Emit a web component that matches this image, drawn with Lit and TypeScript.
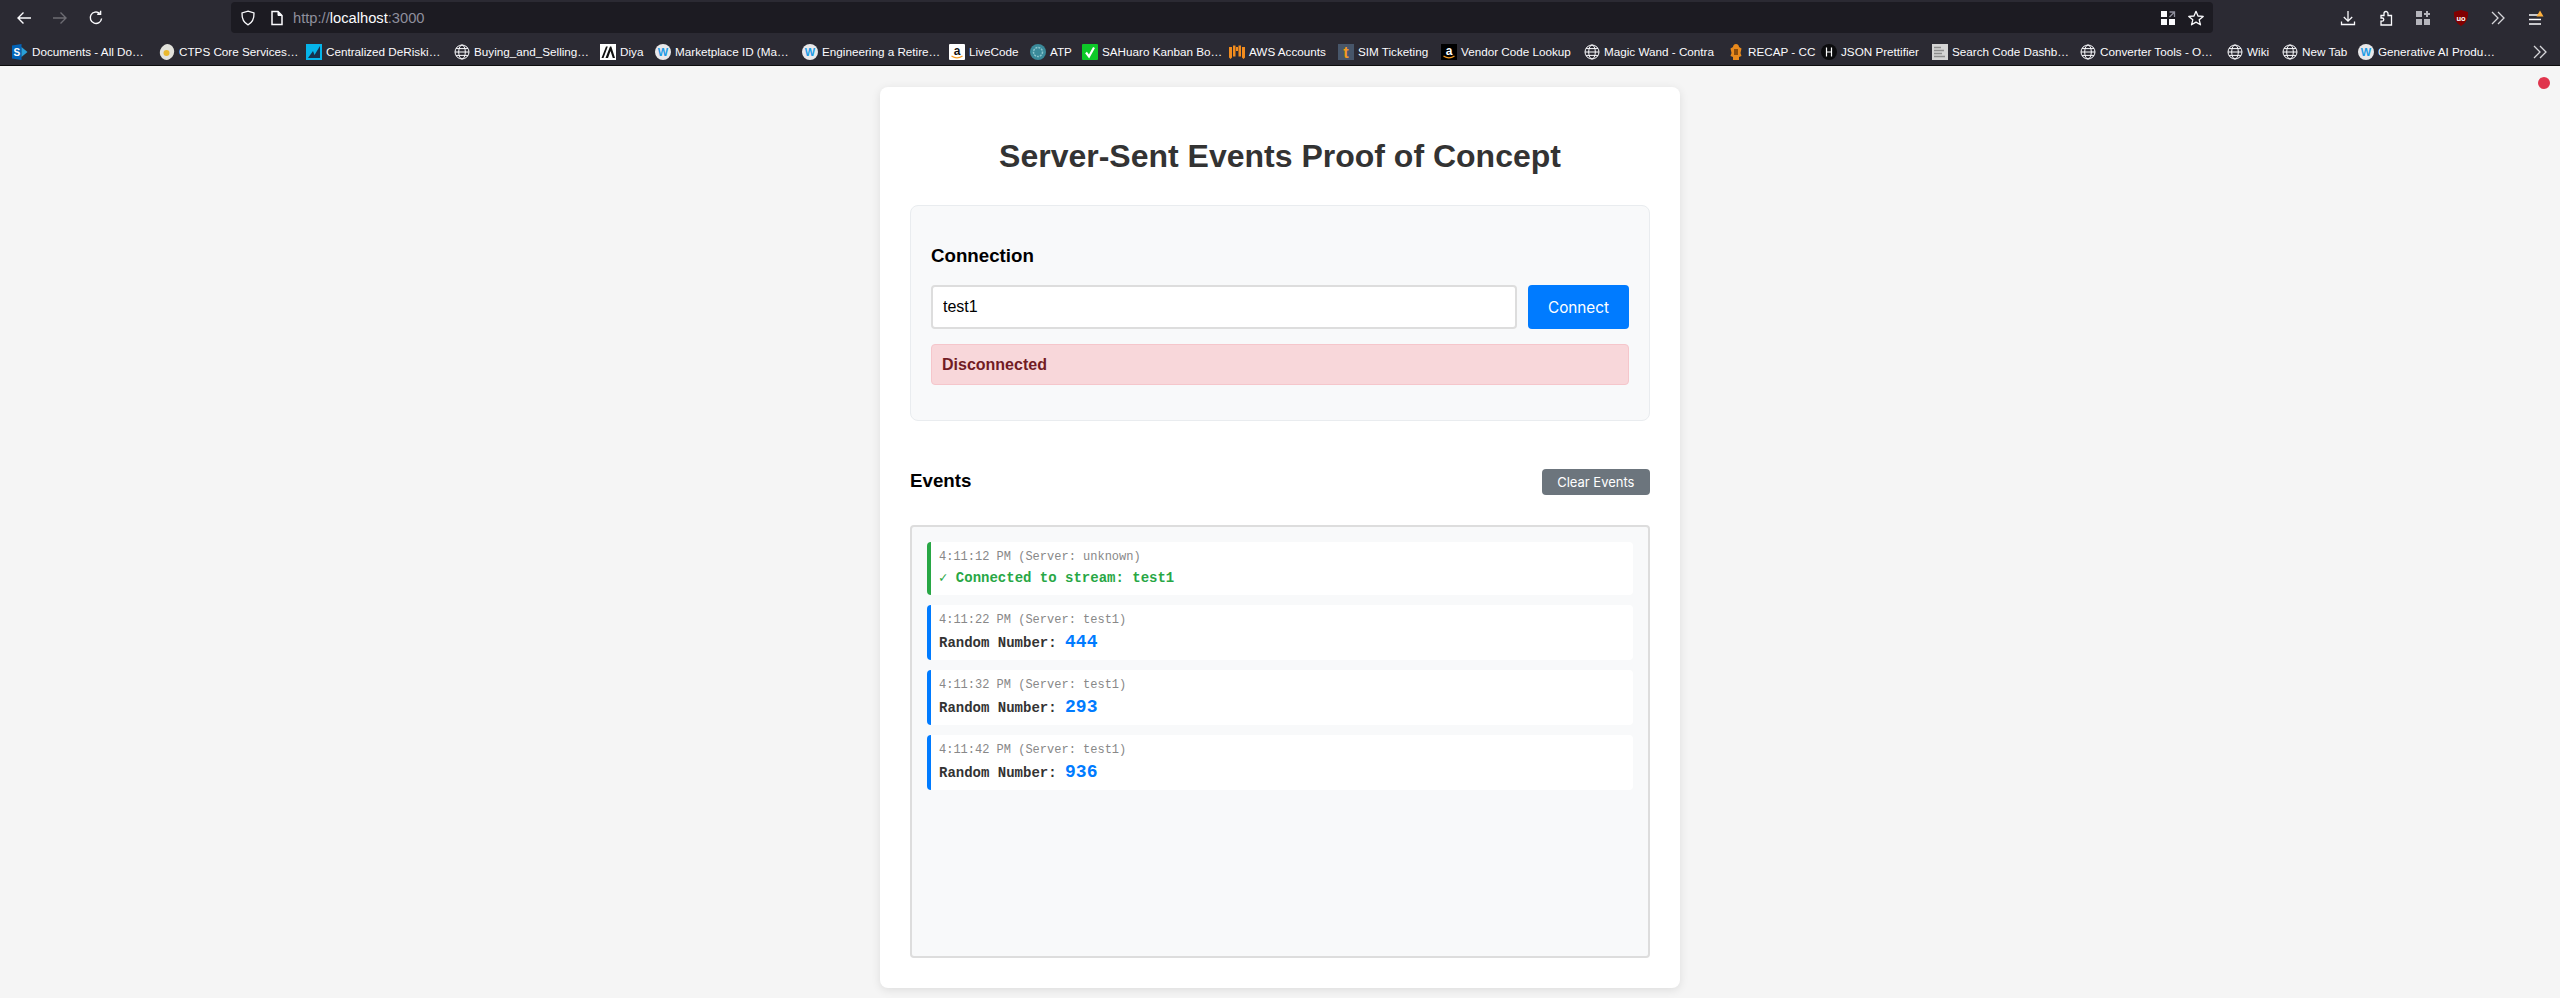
import {LitElement, html, css, svg} from 'lit';
import {customElement, state} from 'lit/decorators.js';
import {classMap} from 'lit/directives/class-map.js';

type EventKind = 'status' | 'number';

interface StreamEvent {
    time: string;
    server: string;
    kind: EventKind;
    value: string;
}

// left = x of the bookmark in the bar, the widths are computed from it
const BOOKMARKS = [
    {label: 'Documents - All Do…', icon: 'sharepoint', left: 12},
    {label: 'CTPS Core Services…', icon: 'ctps', left: 159},
    {label: 'Centralized DeRiski…', icon: 'chart', left: 306},
    {label: 'Buying_and_Selling…', icon: 'globe', left: 454},
    {label: 'Diya', icon: 'diya', left: 600},
    {label: 'Marketplace ID (Ma…', icon: 'wiki', left: 655},
    {label: 'Engineering a Retire…', icon: 'wiki', left: 802},
    {label: 'LiveCode', icon: 'amazon', left: 949},
    {label: 'ATP', icon: 'atp', left: 1030},
    {label: 'SAHuaro Kanban Bo…', icon: 'check', left: 1082},
    {label: 'AWS Accounts', icon: 'aws', left: 1229},
    {label: 'SIM Ticketing', icon: 'ticket', left: 1338},
    {label: 'Vendor Code Lookup', icon: 'amazonDark', left: 1441},
    {label: 'Magic Wand - Contra', icon: 'globe', left: 1584},
    {label: 'RECAP - CC', icon: 'recap', left: 1728},
    {label: 'JSON Prettifier', icon: 'json', left: 1821},
    {label: 'Search Code Dashb…', icon: 'doc', left: 1932},
    {label: 'Converter Tools - O…', icon: 'globe', left: 2080},
    {label: 'Wiki', icon: 'globe', left: 2227},
    {label: 'New Tab', icon: 'globe', left: 2282},
    {label: 'Generative AI Produ…', icon: 'wiki', left: 2358},
];
const BOOKMARKS_END = 2510;

const EVENTS: StreamEvent[] = [
    {time: '4:11:12 PM', server: 'unknown', kind: 'status', value: '✓ Connected to stream: test1'},
    {time: '4:11:22 PM', server: 'test1', kind: 'number', value: '444'},
    {time: '4:11:32 PM', server: 'test1', kind: 'number', value: '293'},
    {time: '4:11:42 PM', server: 'test1', kind: 'number', value: '936'},
];

const ICON_FONT = 'Liberation Sans, sans-serif';

const ICONS: Record<string, ReturnType<typeof svg>> = {
    back: svg`<path d="M15 8H2M7.500 2.500 2 8l5.500 5.500" fill="none" stroke="#fbfbfe" stroke-width="1.400"/>`,
    forward: svg`<path d="M1 8h13M8.500 2.500 14 8l-5.500 5.500" fill="none" stroke="#6d6c73" stroke-width="1.400"/>`,
    reload: svg`<path d="M13.600 8.500A5.700 5.700 0 1 1 11.600 3.400M12.600 .8v3.400H9.200" fill="none" stroke="#fbfbfe" stroke-width="1.400"/>`,
    shield: svg`<path d="M8 1.200 14 3c.2 5.600-1.600 9.600-6 11.800C3.600 12.600 1.800 8.600 2 3z" fill="none" stroke="#fbfbfe" stroke-width="1.300"/>`,
    page: svg`<path d="M3 1.500h6l4 4v9H3z" fill="none" stroke="#fbfbfe" stroke-width="1.500"/><path d="M9 1.500v4h4" fill="#fbfbfe" stroke="#fbfbfe"/>`,
    qr: svg`<path d="M1 1h6v6H1zM1 9h6v6H1zM9 9h6v6H9z" fill="#fbfbfe"/><path d="M9.500 2h5v5M14.500 2 9.500 7" fill="none" stroke="#8f8f9d" stroke-width="1.300"/>`,
    star: svg`<path d="M8 1.300 10 6l5.200.4-4 3.400 1.300 5L8 12.100l-4.500 2.700 1.300-5-4-3.400L6 6z" fill="none" stroke="#fbfbfe" stroke-width="1.300" stroke-linejoin="round"/>`,
    download: svg`<path d="M8 1v10M3.800 7 8 11.200 12.200 7M1.500 11.500v3h13v-3" fill="none" stroke="#fbfbfe" stroke-width="1.300"/>`,
    puzzle: svg`<path d="M3 15h10.500V5.500H10V3.500a2 2 0 0 0-4 0V5.500H3V8h1.200a1.600 1.600 0 0 1 0 3.200H3z" fill="none" stroke="#fbfbfe" stroke-width="1.300"/>`,
    extensions: svg`<path d="M1 1h6v6H1zM1 9h6v6H1zM9 9h6v6H9z" fill="#b5b5bc"/><path d="M12 1v6M9 4h6" stroke="#b5b5bc" stroke-width="2"/>`,
    ublock: svg`<path d="M8 0 15 2c.3 6.500-1.800 11-7 14C2.800 13 .7 8.500 1 2z" fill="#800000"/><text x="8" y="10.500" text-anchor="middle" font-family="${ICON_FONT}" font-size="7.500" font-weight="700" fill="#fff">uo</text>`,
    chevrons: svg`<path d="M2 2l6 6-6 6M8 2l6 6-6 6" fill="none" stroke="#d6d6da" stroke-width="1.300"/>`,
    menu: svg`<path d="M1 5h12M1 9.500h12M1 14h12" stroke="#fbfbfe" stroke-width="1.300"/><path d="M12 .5l3.500 6h-7z" fill="#ffb13d"/>`,
    globe: svg`<g fill="none" stroke="#fbfbfe" stroke-width="1"><circle cx="8" cy="8" r="7"/><ellipse cx="8" cy="8" rx="3.300" ry="7"/><path d="M1 8h14M2 4.600h12M2 11.400h12"/></g>`,
    sharepoint: svg`<path d="M0 1.500 9.500 0v16L0 14.500z" fill="#0364b8"/><path d="M9.500 3 15.500 8l-6 5z" fill="#2a9fd8"/><text x="4.800" y="11.500" text-anchor="middle" font-family="${ICON_FONT}" font-size="10" font-weight="700" fill="#fff">S</text>`,
    ctps: svg`<ellipse cx="8" cy="8" rx="7" ry="8" fill="#e2e2dc" transform="rotate(20 8 8)"/><circle cx="7.500" cy="9" r="3" fill="#eab92f"/>`,
    chart: svg`<path d="M0 0h16v16H0z" fill="#06b4ea"/><path d="M2 14 7 7l1.500 4L14 2v12z" fill="#17324d"/>`,
    diya: svg`<path d="M0 0h16v16H0z" fill="#fff"/><path d="M1.500 14 6 2.500h1.800L3.500 14zM5.500 14 10 2.500h1.300L15 14h-2.200L10.500 7 8 14z" fill="#111"/>`,
    wiki: svg`<circle cx="8" cy="8" r="8" fill="#e8e8ea"/><text x="8" y="12" text-anchor="middle" font-family="${ICON_FONT}" font-size="11" font-weight="700" fill="#1c9be6">W</text>`,
    amazon: svg`<rect width="16" height="16" rx="1" fill="#fff"/><text x="8" y="10.500" text-anchor="middle" font-family="${ICON_FONT}" font-size="12" font-weight="700" fill="#111">a</text><path d="M2.500 12c3.500 2.300 7.500 2.300 11 0" fill="none" stroke="#f59b22" stroke-width="1.300"/>`,
    amazonDark: svg`<rect width="16" height="16" fill="#000"/><text x="8" y="10.500" text-anchor="middle" font-family="${ICON_FONT}" font-size="12" font-weight="700" fill="#fff">a</text><path d="M2.500 12c3.500 2.300 7.500 2.300 11 0" fill="none" stroke="#f59b22" stroke-width="1.300"/>`,
    atp: svg`<circle cx="8" cy="8" r="8" fill="#3a8a9a"/><circle cx="8" cy="8" r="4.500" fill="none" stroke="#8ac4cc" stroke-width="1.500" stroke-dasharray="2 1"/>`,
    check: svg`<rect width="16" height="16" rx="1" fill="#0dc928"/><path d="M4 8.500 7 12.500 12 3.500" fill="none" stroke="#fff" stroke-width="2.200"/>`,
    aws: svg`<path d="M0 3h3v10.500L1.500 15 0 13.500zM13 3h3v10.500L14.500 15 13 13.500zM4 1.500h2.500v11H4zM9.500 1.500H12v11H9.500zM7 3h2v4H7z" fill="#f28c1e"/>`,
    ticket: svg`<rect width="16" height="16" fill="#47566a"/><text x="8" y="14" text-anchor="middle" font-family="${ICON_FONT}" font-size="16" font-weight="700" fill="#f29a1f">t</text>`,
    recap: svg`<path d="M8 0c2 0 3 1.500 3 3l2.500 1.500L12.500 9l1 3-2.500 1v3H5v-3l-2.500-1 1-3-1-4.500L5 3c0-1.500 1-3 3-3z" fill="#e8891c"/><path d="M6 5h4v6H6z" fill="#8a4c0c"/>`,
    json: svg`<circle cx="8" cy="8" r="8" fill="#0c0c0e"/><path d="M5.500 3.500v9M10.500 3.500v9M5.500 8h5" stroke="#fff" stroke-width="1.200" fill="none"/>`,
    doc: svg`<rect width="16" height="16" fill="#d4d4d4"/><path d="M2 3.500h7M2 6.500h10M2 9.500h8M2 12.500h11" stroke="#8c8c8c" stroke-width="1.300"/>`,
};

/**
 * Browser window showing the SSE proof of concept page, disconnected.
 */
@customElement('app-root')
export class AppRoot extends LitElement {
    @state()
    private streamId = 'test1';

    @state()
    private events = EVENTS;

    static styles = css`
        :host {
            display: block;
            position: relative;
            height: 998px;
            overflow: hidden;
            background: #f5f5f5;
            font-family: 'Liberation Sans', Arial, sans-serif;
            color: #000;
        }

        /* Browser chrome */

        .toolbar {
            display: flex;
            align-items: center;
            height: 35px;
            padding-left: 16px;
            box-sizing: border-box;
            background: #2b2a33;
        }

        .nav {
            display: flex;
            gap: 20px;
        }

        .icon {
            display: block;
            width: 16px;
            height: 16px;
            flex: none;
        }

        .urlbar {
            display: flex;
            align-items: center;
            width: 1982px;
            height: 31px;
            margin-left: 127px;
            padding: 0 9px;
            box-sizing: border-box;
            border-radius: 4px;
            background: #1c1b22;
        }

        .url {
            margin-left: 8px;
            font-size: 14.7px;
            color: #8f8f9d;
        }

        .url b {
            font-weight: 400;
            color: #fbfbfe;
        }

        .url-actions {
            display: flex;
            gap: 12px;
            margin-left: auto;
        }

        .page-icon {
            margin-left: 13px;
        }

        .tools {
            display: flex;
            gap: 21.5px;
            margin-left: 127px;
        }

        .bookmarks {
            display: flex;
            align-items: center;
            height: 31px;
            padding: 3px 12px 0;
            box-sizing: border-box;
            background: #2b2a33;
            border-bottom: 1px solid #0c0c0d;
        }

        .bookmark {
            display: flex;
            align-items: center;
            gap: 4px;
            flex: none;
            font-size: 11.7px;
            color: #fbfbfe;
            white-space: nowrap;
        }

        .more {
            margin-left: auto;
        }

        .record-dot {
            position: absolute;
            top: 77px;
            right: 10px;
            width: 12px;
            height: 12px;
            border-radius: 50%;
            background: #e0354d;
        }

        /* Page */

        .page {
            padding-top: 21px;
        }

        .card {
            width: 800px;
            margin: 0 auto;
            padding: 30px;
            box-sizing: border-box;
            border-radius: 8px;
            background: #fff;
            box-shadow: 0 2px 10px rgba(0, 0, 0, 0.1);
        }

        h1 {
            margin: 21.44px 0 30px;
            font-size: 32px;
            font-weight: 700;
            text-align: center;
            color: #333;
        }

        h3 {
            margin: 18.72px 0 18px;
            font-size: 18.72px;
            font-weight: 700;
            line-height: 22px;
        }

        .connection {
            margin-bottom: 30px;
            padding: 20px;
            border: 1px solid #e9ecef;
            border-radius: 8px;
            background: #f8f9fa;
        }

        .connect-row {
            display: flex;
            gap: 11px;
            margin-bottom: 15px;
        }

        .stream-input {
            flex: 1;
            min-width: 0;
            height: 44px;
            padding: 10px;
            box-sizing: border-box;
            border: 2px solid #ddd;
            border-radius: 4px;
            background: #fff;
            font-family: inherit;
            font-size: 16px;
            color: #000;
            outline: none;
        }

        .button {
            border: none;
            border-radius: 4px;
            font-family: Inter, sans-serif;
            color: #fff;
        }

        .button--primary {
            width: 101px;
            flex: none;
            background: #007bff;
            font-size: 15.3px;
        }

        .button--secondary {
            height: 26px;
            margin-top: 2px;
            padding: 0 15.5px;
            background: #6c757d;
            font-size: 13px;
        }

        .status {
            margin-bottom: 15px;
            padding: 10px;
            border: 1px solid #f5c6cb;
            border-radius: 4px;
            background: #f8d7da;
            font-weight: 700;
            font-size: 16px;
            line-height: 19px;
            color: #721c24;
        }

        .events-header {
            display: flex;
            align-items: center;
            justify-content: space-between;
            margin-bottom: 15.5px;
        }

        .events {
            height: 399px;
            padding: 15px;
            overflow-y: auto;
            border: 2px solid #ddd;
            border-radius: 4px;
            background: #f8f9fa;
            font-family: 'Liberation Mono', 'Courier New', monospace;
        }

        .event {
            margin-bottom: 10px;
            padding: 8px;
            border-left: 4px solid #007bff;
            border-radius: 4px;
            background: #fff;
        }

        .event--status {
            border-left-color: #28a745;
        }

        .meta {
            margin-bottom: 5px;
            font-size: 12px;
            color: #888;
        }

        .message {
            font-size: 14px;
            font-weight: 700;
            line-height: 18px;
            color: #333;
        }

        .event--status .message {
            color: #28a745;
        }

        .number {
            font-size: 18px;
            line-height: 20px;
            color: #007bff;
        }
    `;

    private icon(name: string) {
        return svg`<svg class="icon" viewBox="0 0 16 16" aria-hidden="true">${ICONS[name]}</svg>`;
    }

    private renderChrome() {
        return html`
            <div class="toolbar">
                <div class="nav">
                    ${this.icon('back')}${this.icon('forward')}${this.icon('reload')}
                </div>
                <div class="urlbar">
                    ${this.icon('shield')}
                    <span class="page-icon">${this.icon('page')}</span>
                    <span class="url">http://<b>localhost</b>:3000</span>
                    <div class="url-actions">${this.icon('qr')}${this.icon('star')}</div>
                </div>
                <div class="tools">
                    ${this.icon('download')}${this.icon('puzzle')}${this.icon('extensions')}
                    ${this.icon('ublock')}${this.icon('chevrons')}${this.icon('menu')}
                </div>
            </div>
            <div class="bookmarks">
                ${BOOKMARKS.map((b, i) => {
                    const next = BOOKMARKS[i + 1]?.left ?? BOOKMARKS_END;
                    return html`
                        <div class="bookmark" style="width: ${next - b.left}px">
                            ${this.icon(b.icon)}<span>${b.label}</span>
                        </div>
                    `;
                })}
                <span class="more">${this.icon('chevrons')}</span>
            </div>
        `;
    }

    private renderEvent(event: StreamEvent) {
        const classes = {
            event: true,
            'event--status': event.kind === 'status',
        };
        return html`
            <div class=${classMap(classes)}>
                <div class="meta">${event.time} (Server: ${event.server})</div>
                <div class="message">
                    ${event.kind === 'number'
                        ? html`Random Number: <span class="number">${event.value}</span>`
                        : event.value}
                </div>
            </div>
        `;
    }

    render() {
        return html`
            ${this.renderChrome()}
            <span class="record-dot"></span>
            <main class="page">
                <div class="card">
                    <h1>Server-Sent Events Proof of Concept</h1>
                    <section class="connection">
                        <h3>Connection</h3>
                        <div class="connect-row">
                            <input class="stream-input" .value=${this.streamId} />
                            <button class="button button--primary">Connect</button>
                        </div>
                        <div class="status">Disconnected</div>
                    </section>
                    <div class="events-header">
                        <h3>Events</h3>
                        <button class="button button--secondary" @click=${() => (this.events = [])}>
                            Clear Events
                        </button>
                    </div>
                    <div class="events">
                        ${this.events.map((e) => this.renderEvent(e))}
                    </div>
                </div>
            </main>
        `;
    }
}
